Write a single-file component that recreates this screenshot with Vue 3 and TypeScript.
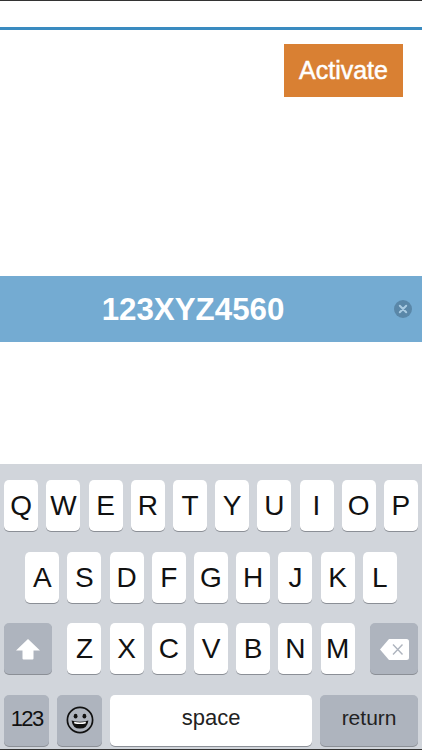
<script setup lang="ts">
const rowOne = ['Q', 'W', 'E', 'R', 'T', 'Y', 'U', 'I', 'O', 'P']
const rowTwo = ['A', 'S', 'D', 'F', 'G', 'H', 'J', 'K', 'L']
const rowThree = ['Z', 'X', 'C', 'V', 'B', 'N', 'M']
</script>

<template>
  <div class="screen">
    <header class="top-bar"></header>
    <div class="actions">
      <button class="activate" type="button">Activate</button>
    </div>

    <div class="code-field">
      <span class="code">123XYZ4560</span>
      <svg class="clear" viewBox="0 0 18 18" width="18" height="18" aria-hidden="true">
        <circle cx="9" cy="9" r="9" fill="#5a87a8" />
        <path d="M5.8 5.8l6.4 6.4M12.2 5.8l-6.4 6.4" stroke="#a9cbe2" stroke-width="2" stroke-linecap="round" />
      </svg>
    </div>

    <div class="keyboard">
      <div class="row">
        <div v-for="k in rowOne" :key="k" class="key">{{ k }}</div>
      </div>
      <div class="row row-center">
        <div v-for="k in rowTwo" :key="k" class="key">{{ k }}</div>
      </div>
      <div class="row row-three">
        <div class="key dark shift">
          <svg viewBox="0 0 24 22" width="24" height="22" aria-hidden="true">
            <path d="M12 1L24 12.5H17.5V20.5Q17.5 21.5 16.5 21.5H7.5Q6.5 21.5 6.5 20.5V12.5H0Z" fill="#fff" />
          </svg>
        </div>
        <div class="letters">
          <div v-for="k in rowThree" :key="k" class="key">{{ k }}</div>
        </div>
        <div class="key dark backspace">
          <svg viewBox="0 0 29 21" width="29" height="21" aria-hidden="true">
            <path d="M9 0H26.5Q29 0 29 2.5V18.5Q29 21 26.5 21H9L0 10.5Z" fill="#fff" />
            <path d="M13 5.5l9.5 10M22.5 5.5l-9.5 10" stroke="#aeb4be" stroke-width="1.4" />
          </svg>
        </div>
      </div>
      <div class="row row-bottom">
        <div class="key dark numbers">123</div>
        <div class="key dark emoji">
          <svg viewBox="0 0 28 28" width="28" height="28" aria-hidden="true">
            <circle cx="14" cy="14" r="12.6" fill="none" stroke="#111" stroke-width="1.7" />
            <ellipse cx="9.6" cy="10.2" rx="1.9" ry="2.4" fill="#111" />
            <ellipse cx="18.4" cy="10.2" rx="1.9" ry="2.4" fill="#111" />
            <path d="M5.6 14.4Q14 17 22.4 14.4Q21.4 22.6 14 22.6Q6.6 22.6 5.6 14.4Z" fill="#111" />
            <path d="M8 15.8Q14 17.4 20 15.8L19.6 17.4Q14 18.8 8.4 17.4Z" fill="#fff" />
          </svg>
        </div>
        <div class="key space">space</div>
        <div class="key dark return">return</div>
      </div>
    </div>
  </div>
</template>

<style scoped>
.screen {
  display: flex;
  flex-direction: column;
  width: 422px;
  height: 750px;
  overflow: hidden;
  background: #fff;
  font-family: "Liberation Sans", Arial, sans-serif;
}

.top-bar {
  flex: none;
  box-sizing: content-box;
  height: 26px;
  border-top: 1px solid #333;
  border-bottom: 3px solid #3a8bc0;
}

.actions {
  display: flex;
  flex: none;
  justify-content: flex-end;
  padding: 14px 19px 0 0;
}

.activate {
  width: 119px;
  height: 53px;
  padding: 0;
  color: #fff;
  font-family: inherit;
  font-size: 25px;
  background: #d98033;
  border: 0;
  -webkit-text-stroke: 0.5px #fff;
}

.code-field {
  position: relative;
  display: flex;
  flex: none;
  align-items: center;
  justify-content: center;
  height: 66px;
  margin-top: 179px;
  color: #fff;
  background: #74abd2;
}

.code {
  margin: 2px 0 0 -36px;
  font-size: 31.3px;
  font-weight: 700;
}

.clear {
  position: absolute;
  top: 24px;
  right: 10px;
}

.keyboard {
  display: flex;
  flex-direction: column;
  flex: none;
  gap: 20.7px;
  box-sizing: border-box;
  height: 286px;
  margin-top: 122px;
  padding: 16px 4.2px 0;
  background: #d1d5db;
  border-bottom: 1px solid #333;
}

.row {
  display: flex;
  gap: 8.2px;
  height: 51px;
}

.row-center {
  justify-content: center;
}

.row-three {
  justify-content: space-between;
}

.letters {
  display: flex;
  gap: 8.2px;
}

.key {
  display: flex;
  flex: none;
  align-items: center;
  justify-content: center;
  box-sizing: border-box;
  width: 34px;
  height: 51px;
  padding-top: 1px;
  color: #111;
  font-size: 28px;
  background: #fff;
  border-radius: 5px;
  box-shadow: 0 1px 0 #8b8f96;
}

.dark {
  background: #aeb4be;
}

.shift {
  width: 47.5px;
}

.backspace {
  width: 47.5px;
}

.numbers {
  width: 45px;
  padding: 0 0 4px;
  font-size: 22px;
  letter-spacing: -1.6px;
}

.emoji {
  width: 44.5px;
  padding: 0 0 2px;
}

.space {
  flex: 1;
  padding: 0 0 6px;
  color: #222;
  font-size: 22px;
}

.return {
  width: 97.5px;
  padding: 0 0 6px;
  color: #222;
  font-size: 21px;
}
</style>
